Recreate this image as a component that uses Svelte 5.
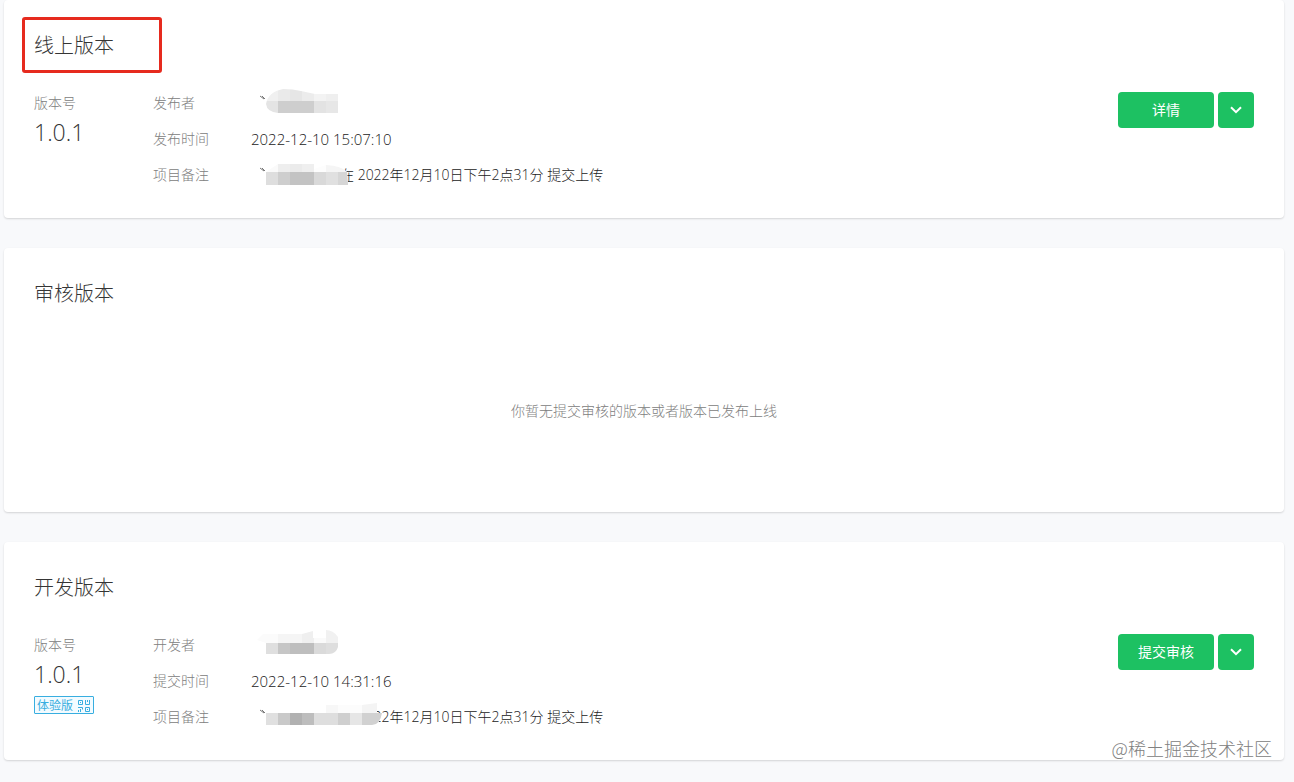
<script>
  // blocks are the grey squares over the account name: [x, y, width, height, fill]
  const versions = [
    {
      id: 'online',
      title: '线上版本',
      marked: true,
      version: '1.0.1',
      action: '详情',
      rows: [
        {
          label: '发布者',
          mark: true,
          shape: 'M15 12Q17 0 32 -3Q42 -3 50 -1L64 2L87 2V21H27Q16 20 15 12Z',
          blocks: [
            [15, -3, 12, 12, '#f0f0f0'],
            [27, -3, 12, 12, '#eaeaea'],
            [39, -3, 12, 12, '#e6e6e6'],
            [51, -3, 12, 12, '#ececec'],
            [63, 0, 12, 9, '#f3f3f3'],
            [75, 2, 12, 7, '#efefef'],
            [15, 9, 12, 12, '#e4e4e4'],
            [27, 9, 36, 12, '#cecece'],
            [63, 9, 12, 12, '#e3e3e3'],
            [75, 9, 12, 12, '#e7e7e7']
          ]
        },
        { label: '发布时间', text: '2022-12-10 15:07:10', time: true },
        {
          label: '项目备注',
          text: '在 2022年12月10日下午2点31分 提交上传',
          mark: true,
          shape: 'M15 8L27 0H63V5L75 1Q91 2 96 8L97 20V21H15Z',
          blocks: [
            [15, -1, 12, 9, '#fafafa'],
            [27, -1, 12, 9, '#eeeeee'],
            [39, -1, 12, 9, '#ebebeb'],
            [51, -1, 12, 9, '#efefef'],
            [63, -1, 12, 9, '#fdfdfd'],
            [75, -1, 24, 9, '#f5f5f5'],
            [15, 8, 12, 13, '#dedede'],
            [27, 8, 12, 13, '#cecece'],
            [39, 8, 24, 13, '#c3c3c3'],
            [63, 8, 12, 13, '#d9d9d9'],
            [75, 8, 12, 13, '#e0e0e0'],
            [87, 8, 12, 13, '#d6d6d6']
          ]
        }
      ]
    },
    {
      id: 'audit',
      title: '审核版本',
      empty: '你暂无提交审核的版本或者版本已发布上线'
    },
    {
      id: 'develop',
      title: '开发版本',
      version: '1.0.1',
      trial: true,
      action: '提交审核',
      rows: [
        {
          label: '开发者',
          shape: 'M6 6L12 0H51L62 -3V4H75V-4Q82 -4 87 3V13Q85 20 78 20H15V9Z',
          blocks: [
            [6, 0, 21, 9, '#fbfbfb'],
            [27, -1, 24, 10, '#f5f5f5'],
            [51, -3, 12, 12, '#efefef'],
            [63, 2, 12, 7, '#fafafa'],
            [75, -4, 12, 13, '#f1f1f1'],
            [15, 9, 12, 12, '#dfdfdf'],
            [27, 9, 12, 12, '#c6c6c6'],
            [39, 9, 24, 12, '#bebebe'],
            [63, 9, 12, 12, '#dadada'],
            [75, 9, 12, 12, '#dedede']
          ]
        },
        { label: '提交时间', text: '2022-12-10 14:31:16', time: true },
        {
          label: '项目备注',
          text: '在 2022年12月10日下午2点31分 提交上传',
          mark: true,
          shape: 'M15 7H75V-1H111L126 -3V7H131Q129 19 121 19H15Z',
          blocks: [
            [75, -3, 12, 10, '#f7f7f7'],
            [87, -1, 24, 8, '#fcfcfc'],
            [111, -3, 16, 10, '#f4f4f4'],
            [15, 7, 12, 12, '#e0e0e0'],
            [27, 7, 12, 12, '#c9c9c9'],
            [39, 7, 12, 12, '#b1b1b1'],
            [51, 7, 12, 12, '#bdbdbd'],
            [63, 7, 24, 12, '#dedede'],
            [87, 7, 12, 12, '#cfcfcf'],
            [99, 7, 12, 12, '#e6e6e6'],
            [111, 7, 20, 12, '#d1d1d1']
          ]
        }
      ]
    }
  ];
</script>

<main class="page">
  {#each versions as item}
    <section class="card">
      <h2 class="title" class:marked={item.marked}>{item.title}</h2>

      {#if item.empty}
        <p class="empty">{item.empty}</p>
      {:else}
        <div class="body">
          <div class="version">
            <div class="label">版本号</div>
            <div class="number">{item.version}</div>
            {#if item.trial}
              <button class="trial" type="button">
                体验版
                <svg width="13" height="13" viewBox="0 0 13 13" fill="none" stroke="currentColor" aria-hidden="true">
                  <path d="M.5 1.5h4v4h-4zM7.5 8.5h4v4h-4zM7.5 1v4.5h4V1M9.5 1v2M0 8.5h4.5v2M.5 11v2M2.5 10v3M2 3.5h1M9 10.5h1" />
                </svg>
              </button>
            {/if}
          </div>

          <dl class="info">
            {#each item.rows as row, i}
              <div class="row">
                <dt class="label">{row.label}</dt>
                <dd class="value" class:time={row.time} class:note={row.shape}>
                  {#if row.text}{row.text}{/if}
                  {#if row.shape}
                    <svg class="mosaic" width="140" height="22" viewBox="0 0 140 22" aria-hidden="true">
                      <clipPath id="{item.id}-{i}"><path d={row.shape} /></clipPath>
                      <path d={row.shape} fill="#fff" />
                      <g clip-path="url(#{item.id}-{i})" shape-rendering="crispEdges">
                        {#each row.blocks as [x, y, w, h, fill]}
                          <rect {x} {y} width={w} height={h} {fill} />
                        {/each}
                      </g>
                      {#if row.mark}
                        <path d="M9 4l4 3M11 4l3 3" stroke="#777" stroke-width="1" />
                      {/if}
                    </svg>
                  {/if}
                </dd>
              </div>
            {/each}
          </dl>

          <div class="actions">
            <button class="btn" type="button">{item.action}</button>
            <button class="btn more" type="button" aria-label="更多">
              <svg width="12" height="8" viewBox="0 0 12 8" fill="none" stroke="#fff" stroke-width="2" aria-hidden="true">
                <path d="M1 1.2l5 5 5-5" />
              </svg>
            </button>
          </div>
        </div>
      {/if}
    </section>
  {/each}
  <div class="watermark">@稀土掘金技术社区</div>
</main>

<style>
  :global(body) {
    background: #f8f9fb;
  }

  .page {
    position: relative;
    display: flex;
    flex-direction: column;
    gap: 30px;
    padding: 0 10px 23px 4px;
    color: #353535;
    font-family: 'Open Sans', 'Noto Sans CJK SC', sans-serif;
    font-size: 14px;
    line-height: 22px;
  }

  .card {
    padding: 30px 30px 32px;
    background: #fff;
    border-radius: 4px;
    box-shadow: 0 1px 2px rgba(0, 0, 0, 0.15);
  }

  .title {
    position: relative;
    margin: 0;
    font-size: 20px;
    font-weight: 300;
    line-height: 32px;
  }

  .marked::after {
    content: '';
    position: absolute;
    top: -13px;
    left: -12px;
    box-sizing: border-box;
    width: 140px;
    height: 56px;
    border: 3px solid #e62a1e;
    border-radius: 3px;
  }

  .body {
    display: flex;
    align-items: flex-start;
    padding-top: 30px;
  }

  .version {
    width: 119px;
  }

  .label {
    color: #808080;
    font-weight: 300;
  }

  .number {
    padding-bottom: 4px;
    font-size: 23px;
    font-weight: 300;
    line-height: 36px;
  }

  .trial {
    display: flex;
    align-items: center;
    justify-content: space-between;
    box-sizing: border-box;
    width: 60px;
    height: 18px;
    padding: 0 2px;
    border: 1px solid #38aee0;
    border-radius: 1px;
    background: #f3fbff;
    color: #38aee0;
    font: 12px/16px 'Noto Sans CJK SC', sans-serif;
    cursor: pointer;
  }

  .info {
    display: flex;
    flex: 1;
    flex-direction: column;
    gap: 14px;
    margin: 0;
  }

  .row {
    display: flex;
    height: 22px;
  }

  .row .label {
    width: 98px;
  }

  .value {
    margin: 0;
    font-weight: 300;
    color: #222;
    white-space: nowrap;
  }

  .time {
    font-size: 15px;
  }

  .note {
    position: relative;
    padding-left: 89px;
  }

  .mosaic {
    position: absolute;
    top: 0;
    left: 0;
    overflow: visible;
  }

  .actions {
    display: flex;
    gap: 4px;
  }

  .btn {
    display: flex;
    align-items: center;
    justify-content: center;
    width: 96px;
    height: 36px;
    padding: 0;
    border: 0;
    border-radius: 4px;
    background: #1dc162;
    color: #fff;
    font: inherit;
    cursor: pointer;
  }

  .more {
    width: 36px;
  }

  .empty {
    margin: 0;
    padding: 90px 0 58px;
    color: #808080;
    font-weight: 300;
    text-align: center;
  }

  .watermark {
    position: absolute;
    right: 22px;
    bottom: 23px;
    color: #808080;
    font: 300 18px/24px 'Noto Sans CJK SC', sans-serif;
    text-shadow: 1px 1px 1px #fff, -1px -1px 1px #fff;
  }
</style>
